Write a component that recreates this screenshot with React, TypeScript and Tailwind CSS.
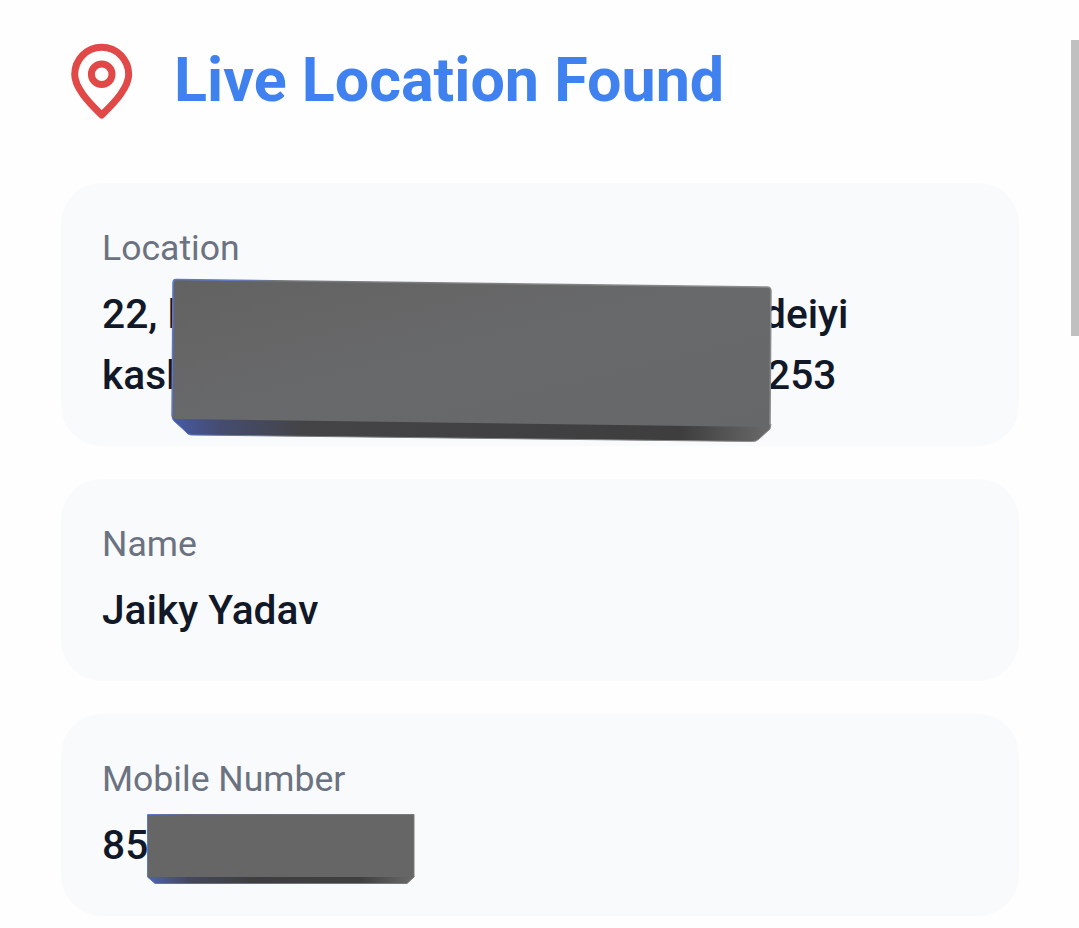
import type { ReactNode } from 'react'

interface InfoCardProps {
    label: string
    children: ReactNode
}

function PinIcon() {
    return (
        <svg
            className="h-[78px] w-[64px] shrink-0"
            viewBox="0 0 64 78"
            fill="none"
            stroke="#e14848"
            strokeWidth="7"
            strokeLinejoin="round"
        >
            <path d="M31.7 73C26 67.3 18.5 60.3 12.8 52.2C8.1 45.7 4.7 39.3 4.7 32.6A27 27.3 0 0 1 58.7 32.6C58.7 39.3 55.3 45.7 50.6 52.2C44.9 60.3 37.4 67.3 31.7 73Z" />
            <circle cx="31.7" cy="32.3" r="10.3" />
        </svg>
    )
}

function InfoCard({ label, children }: InfoCardProps) {
    return (
        <section className="relative rounded-[41px] bg-[#f9fafc] px-[41px] pt-[40px] pb-[40px]">
            <div className="mb-[11px] text-[35.6px] leading-[50px] text-[#6b7280]">{label}</div>
            <div className="text-[40.7px] leading-[61px] font-medium text-[#111827]">{children}</div>
        </section>
    )
}

function AddressCover() {
    return (
        <svg className="absolute top-[95px] left-[109px] h-[166px] w-[604px]" viewBox="0 0 604 166">
            <defs>
                <linearGradient id="address-face" x1="0" y1="0" x2="1" y2="1">
                    <stop offset="0" stopColor="#626262" />
                    <stop offset="0.5" stopColor="#68696a" />
                    <stop offset="1" stopColor="#666769" />
                </linearGradient>
                <linearGradient id="address-side">
                    <stop offset="0" stopColor="#465aa6" />
                    <stop offset="0.08" stopColor="#454c70" />
                    <stop offset="0.22" stopColor="#444446" />
                    <stop offset="0.85" stopColor="#3e3e3f" />
                    <stop offset="1" stopColor="#6a6a6a" />
                </linearGradient>
                <linearGradient id="address-edge">
                    <stop offset="0" stopColor="#5b78d8" />
                    <stop offset="0.1" stopColor="#6078c4" />
                    <stop offset="0.18" stopColor="#77787a" />
                    <stop offset="1" stopColor="#8b8b8b" />
                </linearGradient>
            </defs>
            <path
                d="M2 138L601 146L600 151L589 161Q586 164 582 163.5L21 157Q18 157 16 154L4 143Q2 141 2 138Z"
                fill="url(#address-side)"
                stroke="url(#address-edge)"
                strokeWidth="1"
            />
            <path
                d="M6 1.5L597 9Q601 9 601 13L600 144Q600 149 596 149L6 141Q2 141 2 138L3 5Q3 1.5 6 1.5Z"
                fill="url(#address-face)"
            />
            <path
                d="M2 138L3 5Q3 1.5 6 1.5L597 9Q601 9 601 13L600 147"
                fill="none"
                stroke="url(#address-edge)"
                strokeWidth="1.5"
            />
        </svg>
    )
}

function NumberCover() {
    return (
        <svg className="absolute top-[99px] left-[85px] h-[73px] w-[270px]" viewBox="0 0 270 73">
            <defs>
                <linearGradient id="number-side">
                    <stop offset="0" stopColor="#4e62b0" />
                    <stop offset="0.15" stopColor="#45485c" />
                    <stop offset="0.4" stopColor="#3e3e40" />
                    <stop offset="0.8" stopColor="#404040" />
                    <stop offset="1" stopColor="#6a6a6a" />
                </linearGradient>
                <linearGradient id="number-edge" gradientUnits="userSpaceOnUse" x1="0" y1="0" x2="270" y2="0">
                    <stop offset="0" stopColor="#5f79d2" />
                    <stop offset="0.15" stopColor="#686c80" />
                    <stop offset="1" stopColor="#7c7c7c" />
                </linearGradient>
            </defs>
            <path
                d="M1.5 63H268V64L261 70.5H9L1.5 64Z"
                fill="url(#number-side)"
                stroke="url(#number-edge)"
                strokeWidth="1"
            />
            <path
                d="M2 1.5H267Q268 1.5 268 2.5V63Q268 64 267 64H2.5Q1.5 64 1.5 63V2Z"
                fill="#666667"
            />
            <path d="M1.5 64V1.5H268V64" fill="none" stroke="url(#number-edge)" strokeWidth="1" />
        </svg>
    )
}

export default function App() {
    return (
        <div className="relative h-[928px] overflow-hidden bg-[#fefefe] pr-[60px] pl-[61px] font-[Roboto,sans-serif]">
            <header className="flex h-[183px] items-start gap-[40px] pt-[42px] pl-[9px]">
                <PinIcon />
                <h1 className="text-[61px] leading-[77px] font-bold whitespace-nowrap text-[#3f82ef]">
                    Live Location Found
                </h1>
            </header>

            <main className="flex flex-col gap-[33px]">
                <InfoCard label="Location">
                    <div className="flex">
                        <span className="w-[661px]">22, l</span>
                        <span>deiyi</span>
                    </div>
                    <div className="flex">
                        <span className="w-[665px]">kasl</span>
                        <span>253</span>
                    </div>
                    <AddressCover />
                </InfoCard>
                <InfoCard label="Name">Jaiky Yadav</InfoCard>
                <InfoCard label="Mobile Number">
                    85
                    <NumberCover />
                </InfoCard>
            </main>

            {/* Scrollbar thumb */}
            <div className="absolute top-[40px] right-0 h-[296px] w-[8px] bg-[#c0c0c0]" />
        </div>
    )
}
